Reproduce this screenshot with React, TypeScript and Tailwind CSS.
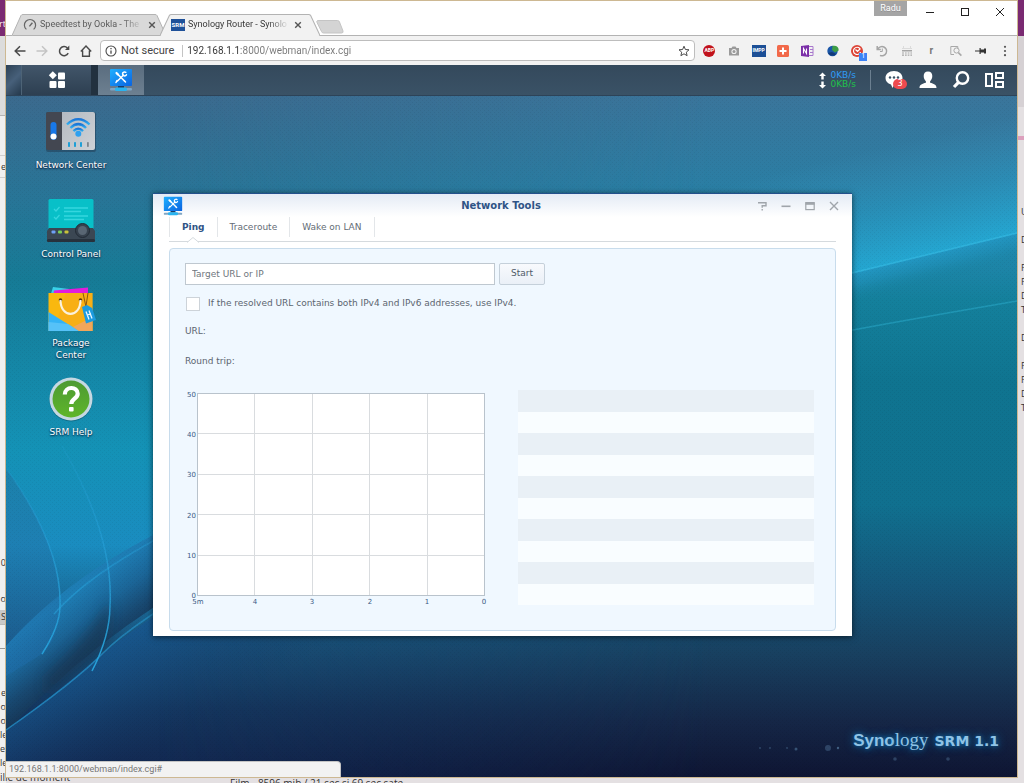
/**
 * Router desktop
 *
 * A browser window showing the router's web desktop, with the
 * Network Tools window open on the Ping tab.
 */

import { useState } from 'react'
import type { ReactNode } from 'react'
import { clsx } from 'clsx'

// ============================================================================
// Data
// ============================================================================

const REAR_LEFT_LINES = ['e', 'o', 'o', 'le', 'ei', 'le']
const REAR_RIGHT_LINES = ['U', '', 'D', '', 'F', 'F', 'D', 'T', '', 'D', '', 'F', 'F', 'D', 'T']

const TOOL_TABS = ['Ping', 'Traceroute', 'Wake on LAN']

const X_LABELS = ['5m', '4', '3', '2', '1', '0']
const Y_LABELS = ['50', '40', '30', '20', '10', '0']

const RESULT_ROWS = Array.from({ length: 10 }, (_, i) => i)

// ============================================================================
// Browser icons
// ============================================================================

function CloseMark() {
  return (
    <svg viewBox="0 0 8 8" className="size-2 shrink-0" aria-hidden="true">
      <path d="M1.2 1.2l5.6 5.6M6.8 1.2L1.2 6.8" stroke="#555" strokeWidth="1.4" />
    </svg>
  )
}

function GaugeIcon() {
  return (
    <svg viewBox="0 0 14 14" className="size-3.5 shrink-0" fill="none" stroke="#666" aria-hidden="true">
      <path d="M3.4 11.4a5.6 5.6 0 1 1 7.2 0" strokeWidth="1.2" />
      <path d="M6.4 8.4l3-3.6" strokeWidth="1.4" />
    </svg>
  )
}

function SrmFavicon() {
  return (
    <span className="flex h-3 w-3.5 shrink-0 items-center justify-center bg-[#1f5199] text-[6px] leading-none font-bold text-white">
      SRM
    </span>
  )
}

function BackIcon({ className, flip }: { className?: string; flip?: boolean }) {
  return (
    <svg viewBox="0 0 12 12" className={clsx('size-3', flip && 'rotate-180', className)} fill="none" stroke="currentColor" aria-hidden="true">
      <path d="M11.5 6H1.5M6 1.2L1.2 6 6 10.8" strokeWidth="1.5" />
    </svg>
  )
}

function ReloadIcon() {
  return (
    <svg viewBox="0 0 12 12" className="size-3" fill="none" stroke="#4a4a4a" aria-hidden="true">
      <path d="M10.2 8.2A4.6 4.6 0 1 1 9.4 2.9" strokeWidth="1.5" />
      <path d="M11.3.6v4.3H7z" fill="#4a4a4a" stroke="none" />
    </svg>
  )
}

function HomeIcon() {
  return (
    <svg viewBox="0 0 12 12" className="size-3" fill="none" stroke="#4a4a4a" aria-hidden="true">
      <path d="M.8 6.6L6 1l5.2 5.6M2.6 5.4v5.8h6.8V5.4" strokeWidth="1.4" />
    </svg>
  )
}

function InfoIcon() {
  return (
    <svg viewBox="0 0 12 12" className="size-3" fill="none" stroke="#4a4a4a" aria-hidden="true">
      <circle cx="6" cy="6" r="5" strokeWidth="1.1" />
      <path d="M6 5.4v3.4M6 3v1.3" strokeWidth="1.3" />
    </svg>
  )
}

function StarIcon() {
  return (
    <svg viewBox="0 0 12 12" className="size-3" fill="none" stroke="#4a4a4a" aria-hidden="true">
      <path d="M6 1.2l1.4 3.3 3.6.3-2.7 2.4.8 3.500L6 8.800l-3.100 1.900.8-3.500L1 4.800l3.600-.3z" strokeWidth="1" />
    </svg>
  )
}

const EXTENSIONS: { name: string; icon: ReactNode }[] = [
  {
    name: 'ABP',
    icon: (
      <span className="flex size-3 items-center justify-center rounded-full bg-[#c1121c] text-[5px] leading-none font-bold text-white">
        ABP
      </span>
    ),
  },
  {
    name: 'Camera',
    icon: (
      <svg viewBox="0 0 12 12" className="size-3" aria-hidden="true">
        <path d="M1 3h2.5l1-1.5h3L8.500 3H11v7.500H1z" fill="#9a9a9a" />
        <circle cx="6" cy="6.500" r="2.600" fill="#f2f2f2" />
        <circle cx="6" cy="6.500" r="1.500" fill="#9a9a9a" />
      </svg>
    ),
  },
  {
    name: 'IMPP',
    icon: (
      <span className="flex h-3 w-3.5 items-center justify-center bg-[#1c4f96] text-[5px] leading-none font-bold text-white">
        IMPP
      </span>
    ),
  },
  {
    name: 'Plus',
    icon: (
      <svg viewBox="0 0 12 12" className="size-3" aria-hidden="true">
        <rect width="12" height="12" rx="1.500" fill="#f2694a" />
        <path d="M6 2.500v7M2.500 6h7" stroke="#fff" strokeWidth="2" />
      </svg>
    ),
  },
  {
    name: 'OneNote',
    icon: (
      <svg viewBox="0 0 13 12" className="h-3 w-[13px]" fill="none" aria-hidden="true">
        <path d="M7 1.500h5v9H7M9 4.500h3M9 7.500h3" stroke="#a878cc" />
        <path d="M0 1l8-1v12l-8-1z" fill="#7b2fa8" />
        <path d="M2.500 8.500v-5l3 5v-5" stroke="#fff" strokeWidth="1.100" />
      </svg>
    ),
  },
  {
    name: 'Globe',
    icon: (
      <svg viewBox="0 0 12 12" className="size-3" aria-hidden="true">
        <circle cx="5.500" cy="6" r="5.200" fill="#1a56a8" />
        <path d="M5.500 1c4-.8 6.300 1.500 6.200 4.500L8 7.500 5 5z" fill="#3f9e46" />
        <path d="M1 8c2 3 6 3.500 8 1L5 7z" fill="#123a78" />
      </svg>
    ),
  },
  {
    name: 'Counter',
    icon: (
      <span className="relative">
        <svg viewBox="0 0 12 12" className="size-3" fill="none" aria-hidden="true">
          <circle cx="6" cy="6" r="6" fill="#dc4437" />
          <path d="M8.800 3.500a3.600 3.600 0 1 0 .7 3.500M4.500 4.500l2 2 3-3" stroke="#fff" strokeWidth="1.200" />
        </svg>
        <span className="absolute top-2 left-2 flex size-2 items-center justify-center bg-[#3b82f6] text-[7px] leading-none text-white">
          1
        </span>
      </span>
    ),
  },
  {
    name: 'History',
    icon: (
      <svg viewBox="0 0 12 12" className="size-3" fill="none" stroke="#a5a5a5" aria-hidden="true">
        <path d="M1.200 1v3.500h3.600M1.800 4.300A4.600 4.600 0 1 1 4 10.300" strokeWidth="1.500" />
        <path d="M6.300 3.500v3H4" />
      </svg>
    ),
  },
  {
    name: 'Calendar',
    icon: (
      <svg viewBox="0 0 12 12" className="size-3" fill="#a5a5a5" aria-hidden="true">
        <path d="M2 1h1v2h6V1h1v2h1v1H1V3h1z" opacity=".3" />
        <path d="M1 5h10v1.500H1zM1 7.500h2v1H1zM4 7.500h1.700v1H4zM6.700 7.500h1.700v1H6.700zM9.400 7.500H11v1H9.400zM1 9.500h2v1.200H1zM4 9.500h1.700v1.200H4zM6.700 9.500h1.700v1.200H6.700zM9.400 9.500H11v1.200H9.400z" />
      </svg>
    ),
  },
  { name: 'Reader', icon: <span className="text-[10px] leading-none font-bold text-[#777]">r</span> },
  {
    name: 'Search page',
    icon: (
      <svg viewBox="0 0 12 12" className="size-3" fill="none" stroke="#a8a8a8" aria-hidden="true">
        <path d="M4 9.500H.800v-8h7v2" />
        <circle cx="6.500" cy="5.500" r="2.600" />
        <path d="M8.400 7.600l3 3" strokeWidth="1.600" />
      </svg>
    ),
  },
  {
    name: 'Pin',
    icon: (
      <svg viewBox="0 0 12 12" className="size-3" fill="#333" aria-hidden="true">
        <path d="M0 5.600h5v1H0zM4.500 3h1.200v1.500H9V3.500h2v5H9v-1H5.700V9H4.500z" />
      </svg>
    ),
  },
]

// ============================================================================
// Synology icons
// ============================================================================

function ToolsIcon({ className }: { className?: string }) {
  return (
    <svg viewBox="0 0 24 24" className={className} aria-hidden="true">
      <defs>
        <linearGradient id="screen" x1="0" y1="0" x2="1" y2="1">
          <stop offset="0" stopColor="#1fb0ff" />
          <stop offset="1" stopColor="#0a63e0" />
        </linearGradient>
      </defs>
      <rect x="1" y="1" width="22" height="17" rx="1" fill="url(#screen)" />
      <rect x="9" y="18" width="6" height="2" fill="#1a3a66" />
      <rect x="1" y="20" width="22" height="2.500" rx="1" fill="#7fa6c4" />
      <rect x="6" y="19.500" width="12" height="3.500" rx="1.500" fill="#2ab4f0" />
      <g stroke="#fff" strokeLinecap="round" fill="none">
        <path d="M8.500 6l7 7" strokeWidth="1.600" />
        <path d="M14.500 7l-6 6" strokeWidth="1.400" />
        <path d="M7.500 5L9 6.500" strokeWidth="2.200" />
        <path d="M16.800 4.300a2 2 0 1 0 .6 2.400M8 12.500l-1 2M15.500 13l1 1" strokeWidth="1.500" />
      </g>
    </svg>
  )
}

function MainMenuIcon() {
  return (
    <svg viewBox="0 0 18 18" className="size-[18px]" fill="#fff" aria-hidden="true">
      <path d="M4.800.3l4 4-4 4-4-4z" />
      <rect x="10" y="1.500" width="7" height="7" rx="1" />
      <rect x="1.500" y="10" width="7" height="7" rx="1" />
      <rect x="10" y="10" width="7" height="7" rx="1" />
    </svg>
  )
}

function NetworkCenterIcon() {
  return (
    <svg viewBox="0 0 50 42" className="h-[42px] w-[50px]" aria-hidden="true">
      <defs>
        <linearGradient id="plate" x1="0" y1="0" x2="1" y2="1">
          <stop offset="0" stopColor="#b4bac1" />
          <stop offset="1" stopColor="#ced2d7" />
        </linearGradient>
        <linearGradient id="wifi" x1="0" y1="0" x2="0" y2="1">
          <stop offset="0" stopColor="#1b76d8" />
          <stop offset="1" stopColor="#32b2f2" />
        </linearGradient>
      </defs>
      <rect x="0" y="1" width="50" height="40" rx="2" fill="#23415a" opacity=".6" />
      <path d="M2 1h14v38H2a2 2 0 0 1-2-2V3a2 2 0 0 1 2-2z" fill="#434751" />
      <path d="M16 1h31a2 2 0 0 1 2 2v34a2 2 0 0 1-2 2H16z" fill="url(#plate)" />
      <rect x="4.500" y="11" width="6" height="18" rx="3" fill="#1878e8" />
      <circle cx="7.500" cy="25.500" r="3" fill="#fff" />
      <g fill="none" stroke="url(#wifi)" strokeWidth="2.400">
        <path d="M21 13.500c7-7 15.500-7 22.500 0" />
        <path d="M24.500 17c5-5 10.500-5 15.500 0" />
        <path d="M27.500 20.200c3-3 6.500-3 9.500 0" />
      </g>
      <circle cx="32.300" cy="22.800" r="3" fill="#2da0f0" />
      <g fill="#1e9fd6">
        <rect x="22" y="31" width="2" height="5" rx=".8" />
        <rect x="28" y="31" width="2" height="5" rx=".8" />
        <rect x="34" y="31" width="2" height="5" rx=".8" />
        <rect x="41" y="31" width="1.800" height="5" rx=".8" fill="#7c848c" />
      </g>
    </svg>
  )
}

function ControlPanelIcon() {
  return (
    <svg viewBox="0 0 50 46" className="h-[46px] w-[50px]" aria-hidden="true">
      <rect x="2.500" y="1" width="45" height="31" rx="1.500" fill="#08c0c8" />
      <g fill="none" stroke="#35d6de" strokeWidth="1.300">
        <path d="M8 11l2 2 3.500-4M8 19l2 2 3.500-4M18 10h24M18 13.500h17M18 18h24M18 21.500h20" />
      </g>
      <path d="M3 30h44l2 3v9.500a1.500 1.500 0 0 1-1.500 1.500h-45A1.500 1.500 0 0 1 1 42.500V33z" fill="#3b4753" />
      <rect x="1" y="41" width="48" height="3" rx="1.500" fill="#27313c" />
      <rect x="5.500" y="32.500" width="4" height="3" rx="1" fill="#6fa0f5" />
      <rect x="12" y="32.500" width="4" height="3" rx="1" fill="#79d058" />
      <rect x="18.500" y="32.500" width="4" height="3" rx="1" fill="#c9c23a" />
      <circle cx="36.500" cy="32.500" r="7" fill="#36414d" stroke="#222b35" />
      <circle cx="36.500" cy="32.500" r="4.500" fill="#596673" />
    </svg>
  )
}

function PackageCenterIcon() {
  return (
    <svg viewBox="0 0 50 46" className="h-[46px] w-[50px]" aria-hidden="true">
      <path d="M7 0l16 2-2 8H4z" fill="#3ad0e8" />
      <path d="M8 3.500l34-3V10H7z" fill="#e21bdc" />
      <path d="M2.500 6h44v38h-44z" fill="#f9b80f" />
      <path d="M20 6h26.500v38H33L12 30z" fill="#f7a51c" opacity=".5" />
      <path d="M2.500 25L33 44H2.500z" fill="#34b3f5" />
      <path d="M2.500 35L22 37l11 7H2.500z" fill="#56c2f8" />
      <path d="M46.500 30v14H33l-6-4z" fill="#f2a65a" />
      <circle cx="14.500" cy="13" r="1.800" fill="#5a3a0c" />
      <circle cx="34.500" cy="13" r="1.800" fill="#5a3a0c" />
      <path d="M14.500 13c0 18.500 20 18.500 20 0" fill="none" stroke="#fbf1dc" strokeWidth="2.200" />
      <path d="M37 6l3 14M42 6l-2 13" stroke="#8a5a10" fill="none" />
      <path d="M36 20l5-2 5 3 4 12-10 3.500z" fill="#1b9be0" />
      <path d="M40 24.500l3 8M43 23.500l3 8M41 28l4-1.200" stroke="#e9f6ff" strokeWidth="1.300" />
    </svg>
  )
}

function HelpIcon() {
  return (
    <svg viewBox="0 0 46 46" className="h-[46px] w-[46px]" aria-hidden="true">
      <defs>
        <linearGradient id="green" x1="0" y1="0" x2="0" y2="1">
          <stop offset="0" stopColor="#4d9a33" />
          <stop offset="1" stopColor="#5fb52a" />
        </linearGradient>
      </defs>
      <circle cx="23" cy="24" r="21.500" fill="#0b4d63" opacity=".5" />
      <circle cx="23" cy="23" r="21.500" fill="#c5d8e2" />
      <circle cx="23" cy="23" r="18.500" fill="url(#green)" />
      <path d="M16.800 18.500c0-8.500 12.900-8.500 12.900-.8 0 5-6.400 5-6.400 10.300" fill="none" stroke="#fff" strokeWidth="4.200" />
      <rect x="21" y="31" width="4.600" height="4.600" rx="1" fill="#fff" />
    </svg>
  )
}

const SHORTCUTS: { label: string; icon: ReactNode }[] = [
  { label: 'Network Center', icon: <NetworkCenterIcon /> },
  { label: 'Control Panel', icon: <ControlPanelIcon /> },
  { label: 'Package Center', icon: <PackageCenterIcon /> },
  { label: 'SRM Help', icon: <HelpIcon /> },
]

// ============================================================================
// Rear windows
// ============================================================================

function RearWindows() {
  return (
    <div className="absolute inset-0 overflow-hidden bg-[#e4e0e2] font-['Open_Sans',sans-serif] text-[9px] leading-[14px] text-[#333]">
      <div className="absolute inset-y-0 left-0 w-1.5 overflow-hidden bg-[#f0f0f0]">
        <div className="flex h-9 items-center justify-end bg-[#7a2a72] pt-3 text-white">rt</div>
        <div className="h-20 border-b border-[#b5b5b5] bg-[#dcdcdc]" />
        <div className="h-10 border-b border-[#cfcfcf]" />
        <div className="flex h-[22px] items-center justify-end border-b border-[#cfcfcf]">e</div>
        <div className="mt-[378px] text-right">0</div>
        <div className="mt-[22px] text-right">o</div>
        <div className="mt-1 border-b border-[#bbb] bg-[#c9c9c9] text-right">S</div>
        <div className="h-6 border-b border-[#999]" />
        <div className="mt-[37px] text-right">
          {REAR_LEFT_LINES.map((line, i) => (
            <div key={i}>{line}</div>
          ))}
        </div>
      </div>
      <div className="absolute inset-y-0 right-0 w-1.5 overflow-hidden">
        <div className="h-9 bg-[#7a2a72]" />
        <div className="h-[71px] bg-[#d6d1d4]" />
        <div className="mt-[29px] h-1 bg-[#dca0bd]" />
        <div className="mt-[65px] pl-[3px]">
          {REAR_RIGHT_LINES.map((line, i) => (
            <div key={i} className="h-3.5">{line}</div>
          ))}
        </div>
      </div>
      <p className="absolute bottom-0 left-0 h-3 text-[10px] leading-3">ille de moment</p>
      <p className="absolute bottom-0 left-[230px] h-[7px] text-[10px] leading-[14px]">
        Film - 8596 mib / 21 sec si 69 sec sate
      </p>
    </div>
  )
}

// ============================================================================
// Browser chrome
// ============================================================================

function BrowserTab({ title, icon, active }: { title: string; icon: ReactNode; active?: boolean }) {
  return (
    <div className={clsx('relative h-[22px]', active ? 'z-10 -ml-1.5 w-[160px]' : 'z-0 w-[154px]')}>
      <svg viewBox="0 0 154 22" preserveAspectRatio="none" className="absolute inset-0 h-full w-full" aria-hidden="true">
        <path d="M0 21.500L9 1.500Q9.500.5 11 .5H143Q144.500.5 145 1.500L154 21.500" fill={active ? '#f2f2f2' : '#d9d9d9'} stroke="#b3b3b3" />
        <path d="M1 21.500H153" stroke={active ? '#f2f2f2' : '#b3b3b3'} />
      </svg>
      <div className={clsx('relative flex h-full items-center pl-[11px]', active ? 'gap-[3px] pr-4' : 'gap-[3px] pr-2')}>
        {icon}
        <button
          type="button"
          className={clsx(
            'min-w-0 flex-1 overflow-hidden bg-clip-text text-left text-[9px] whitespace-nowrap text-transparent',
            active
              ? 'bg-[linear-gradient(90deg,#333_80%,transparent)]'
              : 'bg-[linear-gradient(90deg,#555_80%,transparent)]'
          )}
        >
          {title}
        </button>
        <button type="button" aria-label={`Close ${title}`} className="mx-0.5 flex shrink-0">
          <CloseMark />
        </button>
      </div>
    </div>
  )
}

function TitleBar() {
  return (
    <div className="flex h-[35px] items-end border-b border-[#b3b3b3] bg-white">
      <div className="-mb-px flex pl-1.5">
        <BrowserTab title="Speedtest by Ookla - The" icon={<GaugeIcon />} />
        <BrowserTab title="Synology Router - Synolo" icon={<SrmFavicon />} active />
        <button type="button" aria-label="New tab" className="-ml-1 mb-0.5 self-end">
          <svg viewBox="0 0 28 14" className="h-3.5 w-7" aria-hidden="true">
            <path d="M1.500.5h20q1.500 0 2 1.500l3.500 9q.5 2-1.500 2h-18q-1.500 0-2-1.500l-4.500-9Q.5.5 1.500.5z" fill="#d4d4d4" stroke="#c4c4c4" />
          </svg>
        </button>
      </div>
      <div className="ml-auto flex self-stretch">
        <button type="button" className="mr-[18px] h-[15px] w-[33px] bg-[#a5a5a5] text-[9px] leading-[15px] text-white text-shadow-2xs">
          Radu
        </button>
        <div className="mt-[5px] mr-3 flex h-3 items-center gap-[25px]">
          <button type="button" aria-label="Minimize" className="flex w-2.5">
            <svg viewBox="0 0 10 10" className="size-2.5" aria-hidden="true">
              <path d="M1 5.500h8" stroke="#222" />
            </svg>
          </button>
          <button type="button" aria-label="Maximize" className="flex w-2.5">
            <svg viewBox="0 0 10 10" className="size-2.5" aria-hidden="true">
              <rect x="1.500" y="1.500" width="7" height="7" fill="none" stroke="#222" />
            </svg>
          </button>
          <button type="button" aria-label="Close" className="flex w-2.5">
            <svg viewBox="0 0 10 10" className="size-2.5" aria-hidden="true">
              <path d="M1 1l8 8M9 1L1 9" stroke="#222" />
            </svg>
          </button>
        </div>
      </div>
    </div>
  )
}

function Toolbar() {
  return (
    <div className="flex h-[29px] items-center bg-[#f2f2f2] pl-2">
      <div className="flex items-center gap-2.5">
        <button type="button" aria-label="Back"><BackIcon className="text-[#4a4a4a]" /></button>
        <button type="button" aria-label="Forward"><BackIcon className="text-[#c4c4c4]" flip /></button>
        <button type="button" aria-label="Reload"><ReloadIcon /></button>
        <button type="button" aria-label="Home"><HomeIcon /></button>
      </div>
      <div className="ml-2 flex h-[21px] min-w-0 flex-1 items-center rounded-sm border border-[#bdbdbd] bg-white px-1 text-[11px] text-[#444]">
        <InfoIcon />
        <span className="ml-1 border-r border-[#c4c4c4] pr-2 leading-3 whitespace-nowrap">Not secure</span>
        <input
          type="text"
          aria-label="Address"
          defaultValue="192.168.1.1:8000/webman/index.cgi"
          className="ml-1 min-w-0 flex-1 bg-[linear-gradient(90deg,#333_54px,#777_54px)] bg-clip-text text-[10px] text-transparent outline-none"
        />
        <button type="button" aria-label="Bookmark"><StarIcon /></button>
      </div>
      <div className="ml-0.5 grid w-[296px] grid-cols-12 items-center">
        {EXTENSIONS.map((ext) => (
          <button key={ext.name} type="button" aria-label={ext.name} className="flex items-center justify-center">
            {ext.icon}
          </button>
        ))}
      </div>
      <button type="button" aria-label="Menu" className="flex w-6 justify-center">
        <svg viewBox="0 0 4 12" className="h-3 w-1" fill="#555" aria-hidden="true">
          <circle cx="2" cy="1.800" r="1.100" />
          <circle cx="2" cy="6" r="1.100" />
          <circle cx="2" cy="10.200" r="1.100" />
        </svg>
      </button>
    </div>
  )
}

// ============================================================================
// Desktop taskbar
// ============================================================================

function Taskbar() {
  return (
    <header className="relative z-10 flex h-[31px] items-stretch border-b border-[#2d4358] bg-linear-to-b from-[#34495c] to-[#3a5266]">
      <div className="w-4 border-r border-[#4d6376] bg-linear-135 from-[#2d4155] via-[#47607a] to-[#25394c]" />
      <button type="button" aria-label="Main menu" className="flex w-[69px] items-center justify-center bg-linear-to-b from-[#42566a] to-[#2d3f51]">
        <MainMenuIcon />
      </button>
      <div className="w-[7px] bg-[#22313f]" />
      <button type="button" aria-label="Network Tools" className="flex w-[46px] items-center justify-center bg-linear-to-b from-[#5a6d7f] to-[#6d8091]">
        <ToolsIcon className="size-6" />
      </button>
      <div className="ml-auto flex items-center font-['DejaVu_Sans',sans-serif]">
        <div className="text-[9px] leading-[9px]">
          <div className="flex items-center gap-1 text-[#2f9bf5]">
            <svg viewBox="0 0 7 8" className="h-2 w-[7px]" fill="#fff" aria-hidden="true">
              <path d="M3.500.5L7 4H4.700v3.500H2.300V4H0z" />
            </svg>
            0KB/s
          </div>
          <div className="flex items-center gap-1 text-[#1fc24a]">
            <svg viewBox="0 0 7 8" className="h-2 w-[7px]" fill="#fff" aria-hidden="true">
              <path d="M3.500 7.500L7 4H4.700V.5H2.300V4H0z" />
            </svg>
            0KB/s
          </div>
        </div>
        <div className="mx-3.5 h-5 w-px bg-[#6b7f90]" />
        <div className="mr-[13px] flex items-center gap-[13px]">
          <button type="button" aria-label="Notifications" className="relative">
            <svg viewBox="0 0 20 18" className="h-[18px] w-5" aria-hidden="true">
              <path d="M9 0c5 0 8.500 3 8.500 7S14 14 9 14l-1.500 3L6 13.500C2.500 12.500.5 10 .5 7 .5 3 4 0 9 0z" fill="#fff" />
              <g fill="#3a5266">
                <circle cx="5" cy="6.500" r="1.200" />
                <circle cx="9" cy="6.500" r="1.200" />
                <circle cx="13" cy="6.500" r="1.200" />
              </g>
            </svg>
            <span className="absolute top-2 left-2 h-2.5 w-3.5 rounded-full bg-[#ee4a4f] text-center text-[8px] leading-[10px] text-white">3</span>
          </button>
          <button type="button" aria-label="User">
            <svg viewBox="0 0 20 18" className="h-[18px] w-5" fill="#fff" aria-hidden="true">
              <path d="M10 .5c3 0 4.300 2 4.300 4.500 0 2.300-1 4.300-2.200 5.200v1.600c3.500 1 6.400 1.800 6.400 5.200h-17c0-3.400 2.900-4.200 6.400-5.200v-1.600C6.700 9.300 5.700 7.300 5.700 5 5.700 2.500 7 .5 10 .5z" />
            </svg>
          </button>
          <button type="button" aria-label="Search">
            <svg viewBox="0 0 20 18" className="h-[18px] w-5" fill="none" stroke="#fff" aria-hidden="true">
              <circle cx="11.500" cy="7" r="5.700" strokeWidth="2.400" />
              <path d="M7.500 11.300L3 16" strokeWidth="3.200" />
            </svg>
          </button>
          <button type="button" aria-label="Widgets">
            <svg viewBox="0 0 20 18" className="h-[18px] w-5" fill="none" stroke="#fff" strokeWidth="2" aria-hidden="true">
              <rect x="2" y="3" width="6" height="12" />
              <rect x="12" y="2" width="7" height="5" />
              <rect x="12" y="11" width="7" height="5" />
            </svg>
          </button>
        </div>
      </div>
    </header>
  )
}

// ============================================================================
// Wallpaper
// ============================================================================

function Wallpaper() {
  return (
    <svg viewBox="0 0 1011 681" preserveAspectRatio="none" className="absolute inset-0 h-full w-full" aria-hidden="true">
      <defs>
        <linearGradient id="left" x1="0" y1="0" x2="0" y2="1">
          <stop offset="0" stopColor="#3b6a8e" />
          <stop offset=".15" stopColor="#287597" />
          <stop offset=".27" stopColor="#167b96" />
          <stop offset=".52" stopColor="#1492b6" />
          <stop offset=".66" stopColor="#1a8cc0" />
          <stop offset=".8" stopColor="#19527c" />
          <stop offset=".9" stopColor="#14365f" />
          <stop offset="1" stopColor="#12264f" />
        </linearGradient>
        <linearGradient id="right" x1="0" y1="0" x2="0" y2="1">
          <stop offset="0" stopColor="#3a759b" />
          <stop offset=".12" stopColor="#2c7da3" />
          <stop offset=".24" stopColor="#1f86aa" />
          <stop offset=".3" stopColor="#14809c" />
          <stop offset=".42" stopColor="#0f7490" />
          <stop offset=".6" stopColor="#10708f" />
          <stop offset=".72" stopColor="#15567a" />
          <stop offset=".82" stopColor="#184060" />
          <stop offset=".92" stopColor="#152646" />
          <stop offset="1" stopColor="#0e1533" />
        </linearGradient>
        <linearGradient id="across" x1="0" y1="0" x2="1" y2="0">
          <stop offset=".15" stopColor="#fff" stopOpacity="0" />
          <stop offset=".7" stopColor="#fff" />
        </linearGradient>
        <linearGradient id="beam" gradientUnits="userSpaceOnUse" x1="901" y1="45" x2="928" y2="157">
          <stop offset="0" stopColor="#3f9cc8" stopOpacity="0" />
          <stop offset=".5" stopColor="#2ba0cc" stopOpacity=".4" />
          <stop offset="1" stopColor="#25acd8" stopOpacity=".85" />
        </linearGradient>
        <linearGradient id="under" gradientUnits="userSpaceOnUse" x1="928" y1="157" x2="935" y2="186">
          <stop offset="0" stopColor="#2399c6" stopOpacity=".9" />
          <stop offset=".4" stopColor="#1f90b8" stopOpacity=".7" />
          <stop offset="1" stopColor="#14809c" stopOpacity="0" />
        </linearGradient>
        <linearGradient id="deep" gradientUnits="userSpaceOnUse" x1="10" y1="540" x2="50" y2="594">
          <stop offset="0" stopColor="#1e7db4" />
          <stop offset=".4" stopColor="#1b6597" />
          <stop offset=".75" stopColor="#184870" />
          <stop offset="1" stopColor="#16395b" />
        </linearGradient>
        <linearGradient id="glow" gradientUnits="userSpaceOnUse" x1="60" y1="570" x2="120" y2="670">
          <stop offset="0" stopColor="#17578f" stopOpacity=".9" />
          <stop offset="1" stopColor="#143763" stopOpacity="0" />
        </linearGradient>
        <linearGradient id="side" x1="0" y1="0" x2="0" y2="1">
          <stop offset="0" stopColor="#256a96" stopOpacity=".4" />
          <stop offset="1" stopColor="#1f6fb0" stopOpacity=".4" />
        </linearGradient>
        <linearGradient id="arc" gradientUnits="userSpaceOnUse" x1="0" y1="360" x2="0" y2="575">
          <stop offset="0" stopColor="#27a3dc" stopOpacity=".15" />
          <stop offset=".6" stopColor="#27a3dc" stopOpacity=".7" />
          <stop offset="1" stopColor="#27a3dc" />
        </linearGradient>
        <mask id="fade">
          <rect width="1011" height="681" fill="url(#across)" />
        </mask>
        <filter id="soft" x="-20%" y="-20%" width="140%" height="140%">
          <feGaussianBlur stdDeviation="6" />
        </filter>
        <filter id="hair">
          <feGaussianBlur stdDeviation=".7" />
        </filter>
        <pattern id="weave" width="4" height="4" patternUnits="userSpaceOnUse">
          <path d="M0 0h1v1H0zM2 2h1v1H2z" fill="#000" opacity=".05" />
        </pattern>
      </defs>

      <rect width="1011" height="681" fill="url(#left)" />
      <rect width="1011" height="681" fill="url(#right)" mask="url(#fade)" />

      {/* light beam on the right */}
      <path d="M600 234Q740 203 846 177T1011 137V0H600z" fill="url(#beam)" />
      <path d="M700 212L846 177 1011 137V220H700z" fill="url(#under)" />
      <path d="M700 212L846 177 1011 137" fill="none" stroke="#35bde6" strokeWidth="1.500" filter="url(#hair)" opacity=".7" />
      <path d="M700 262Q846 233 1011 205" fill="none" stroke="#2aa9c9" strokeWidth="1.500" filter="url(#hair)" opacity=".55" />

      {/* folds on the left */}
      <path d="M0 550Q70 470 200 414V480Q90 540 0 636z" fill="url(#deep)" />
      <path d="M40 580Q80 545 103 505Q108 530 97 557L40 600z" fill="#16304c" opacity=".5" filter="url(#soft)" />
      <path d="M0 634Q60 590 97 557Q150 515 220 480L400 540 130 681H0z" fill="url(#glow)" />
      <path d="M0 372Q56 450 54 510Q54 540 36 558L0 580z" fill="url(#side)" />
      <g fill="none" stroke="url(#arc)" filter="url(#hair)" strokeWidth="1.500">
        <path d="M0 372Q56 450 54 510Q54 530 36 558" />
        <path d="M56 350Q108 440 104 510Q104 540 86 575" />
        <path d="M48 518Q90 470 200 418" opacity=".7" />
        <path d="M0 634Q70 585 97 557Q130 525 200 486" opacity=".6" />
      </g>

      {/* sparks near the logo */}
      <g fill="#6fa0c8">
        <circle cx="822" cy="652" r="3" opacity=".3" />
        <circle cx="832" cy="652" r="1.200" opacity=".5" />
        <circle cx="790" cy="653" r="1.500" opacity=".4" />
        <circle cx="781" cy="652" r="1" opacity=".3" />
        <circle cx="764" cy="652" r="1" opacity=".3" />
        <circle cx="754" cy="652" r="1" opacity=".3" />
        <circle cx="889" cy="663" r="1.800" opacity=".3" />
        <circle cx="942" cy="663" r="1.800" opacity=".3" />
      </g>
      <rect width="1011" height="681" fill="url(#weave)" />
    </svg>
  )
}

// ============================================================================
// Network Tools window
// ============================================================================

function PingChart() {
  return (
    <svg viewBox="0 0 306 222" className="h-[222px] w-[306px] shrink-0 font-['DejaVu_Sans',sans-serif] text-[7px]" role="img" aria-label="Round trip time">
      <rect x="12.500" y="6.500" width="287" height="202" fill="#fff" stroke="#b9c3cc" />
      {[1, 2, 3, 4].map((n) => (
        <g key={n} stroke="#d9dcdf">
          <path d={`M${Math.round(12 + n * 57.4) + 0.5} 7v201`} />
          <path d={`M13 ${Math.round(6 + n * 40.4) + 0.5}h286`} />
        </g>
      ))}
      <g fill="#3a5a84">
        {Y_LABELS.map((label, i) => (
          <text key={label} x="11" y={Math.round(10 + i * 40.2)} textAnchor="end">{label}</text>
        ))}
        {X_LABELS.map((label, i) => (
          <text key={label} x={Math.round(13 + i * 57.2)} y="217" textAnchor="middle">{label}</text>
        ))}
      </g>
    </svg>
  )
}

function PingPanel() {
  return (
    <div className="mx-4 mt-1.5 mb-[5px] flex-1 rounded-sm border border-[#c8dcec] bg-[#f0f8ff] px-[15px] pt-3.5 text-[9px] text-[#5c6570]">
      <form className="flex gap-1" onSubmit={(e) => e.preventDefault()}>
        <input
          type="text"
          aria-label="Target URL or IP"
          placeholder="Target URL or IP"
          className="h-[22px] w-[310px] border border-[#bfc8d0] bg-white px-1.5 outline-none placeholder:text-[#6f767d]"
        />
        <button type="submit" className="h-[22px] w-[46px] rounded-xs border border-[#c5d0da] bg-linear-to-b from-[#f8fafd] to-[#eaf0f7] text-[#4e5a68]">
          Start
        </button>
      </form>
      <label className="mt-2 flex h-[22px] items-center gap-2">
        <input type="checkbox" className="ml-px size-3.5 appearance-none border border-[#cdd3d9] bg-white" />
        If the resolved URL contains both IPv4 and IPv6 addresses, use IPv4.
      </label>
      <p className="mt-2 leading-4">URL:</p>
      <p className="mt-3.5 leading-4">Round trip:</p>
      <div className="mt-[18px] flex items-start justify-between pr-1.5">
        <PingChart />
        <table className="mt-[3px] h-[215px] w-[296px] border-collapse" aria-label="Ping results">
          <tbody>
            {RESULT_ROWS.map((row) => (
              <tr key={row} className="odd:bg-[#e9f0f6] even:bg-[#f9fdff]">
                <td className="p-0" />
              </tr>
            ))}
          </tbody>
        </table>
      </div>
    </div>
  )
}

function NetworkToolsWindow() {
  const [tab, setTab] = useState('Ping')

  return (
    <section className="absolute top-[97px] left-[147px] flex h-[443px] w-[699px] flex-col border-t border-[#23508c] bg-white font-['DejaVu_Sans',sans-serif] shadow-[0_1px_6px_rgba(0,0,0,0.6)]">
      <div className="flex h-[23px] items-center bg-linear-to-b from-[#e4ebf5] to-white px-2.5">
        <div className="flex flex-1">
          <ToolsIcon className="size-5" />
        </div>
        <h1 className="text-[10px] font-bold text-[#2f5486]">Network Tools</h1>
        <div className="flex flex-1 items-center justify-end gap-3.5 pr-[3px] text-[#a0a5ab]">
          <button type="button" aria-label="Help">
            <svg viewBox="0 0 10 10" className="size-2.5" fill="none" stroke="currentColor" strokeWidth="1.400" aria-hidden="true">
              <path d="M1 1.700h8v3H5.200v2M5.200 8v1.400" />
            </svg>
          </button>
          <button type="button" aria-label="Minimize window">
            <svg viewBox="0 0 10 10" className="size-2.5" stroke="currentColor" strokeWidth="1.600" aria-hidden="true">
              <path d="M.5 5.300h9" />
            </svg>
          </button>
          <button type="button" aria-label="Maximize window">
            <svg viewBox="0 0 10 10" className="size-2.5" fill="none" stroke="currentColor" strokeWidth="1.200" aria-hidden="true">
              <rect x=".8" y="1.600" width="8.400" height="7" />
              <path d="M.5 2.800h9" strokeWidth="2" />
            </svg>
          </button>
          <button type="button" aria-label="Close window">
            <svg viewBox="0 0 10 10" className="size-2.5" stroke="currentColor" strokeWidth="1.400" aria-hidden="true">
              <path d="M1 1l8 8M9 1L1 9" />
            </svg>
          </button>
        </div>
      </div>

      {/* Tabs */}
      <div role="tablist" className="mx-4 flex h-[25px] border-b border-[#d5dade] text-[9px]">
        {TOOL_TABS.map((name) => (
          <button
            key={name}
            type="button"
            role="tab"
            aria-selected={tab === name}
            onClick={() => setTab(name)}
            className={clsx(
              'relative h-5 border-r border-[#e3e6e9] px-3 pt-0.5 first:border-l',
              tab === name ? 'font-bold text-[#2f5486]' : 'text-[#646c76]'
            )}
          >
            {name}
            {tab === name && (
              <svg viewBox="0 0 12 6" className="absolute top-5 left-1/2 h-1.5 w-3 -translate-x-1/2" aria-hidden="true">
                <path d="M0 5.500L6 .5l6 5" fill="#fff" stroke="#d5dade" />
              </svg>
            )}
          </button>
        ))}
      </div>

      <PingPanel />
    </section>
  )
}

// ============================================================================
// Desktop
// ============================================================================

function Desktop() {
  return (
    <main className="relative min-h-[640px] flex-1 overflow-hidden">
      <Wallpaper />

      <nav className="relative ml-[25px] flex w-20 flex-col pt-3.5">
        {SHORTCUTS.map((item) => (
          <button
            key={item.label}
            type="button"
            className="flex h-[89px] flex-col items-center font-['DejaVu_Sans',sans-serif] text-[9px] leading-3 text-white [text-shadow:0_1px_2px_#002]"
          >
            <span className="flex h-11 items-center">{item.icon}</span>
            <span className={clsx('mt-[5px]', item.label === 'Package Center' ? 'w-12' : 'whitespace-nowrap')}>
              {item.label}
            </span>
          </button>
        ))}
      </nav>

      <NetworkToolsWindow />

      <p className="absolute right-[18px] bottom-6 flex items-baseline leading-6 text-[#8fc3e6] [text-shadow:0_0_10px_#1277b4,0_0_4px_#0e5f98]">
        <span className="font-['Liberation_Sans',sans-serif] text-[17px] font-bold">Syno</span>
        <span className="font-['Liberation_Serif',serif] text-[19px]">logy</span>
        <span className="ml-1.5 font-['DejaVu_Sans',sans-serif] text-[14px] font-bold">SRM 1.1</span>
      </p>

      <div className="absolute bottom-0 left-0 h-4 w-[335px] rounded-tr-sm border-t border-r border-[#c4c4c4] bg-[#f2f2f2] pl-[3px] text-[9px] leading-[15px] text-[#777]">
        192.168.1.1:8000/webman/index.cgi#
      </div>
    </main>
  )
}

// ============================================================================
// App
// ============================================================================

export default function App() {
  return (
    <div className="relative flex min-h-screen flex-col font-[Roboto,sans-serif]">
      <RearWindows />
      <div className="relative mr-1.5 mb-[5px] ml-[5px] flex flex-1 flex-col border border-[#cdb892]">
        <TitleBar />
        <Toolbar />
        <Taskbar />
        <Desktop />
      </div>
    </div>
  )
}
